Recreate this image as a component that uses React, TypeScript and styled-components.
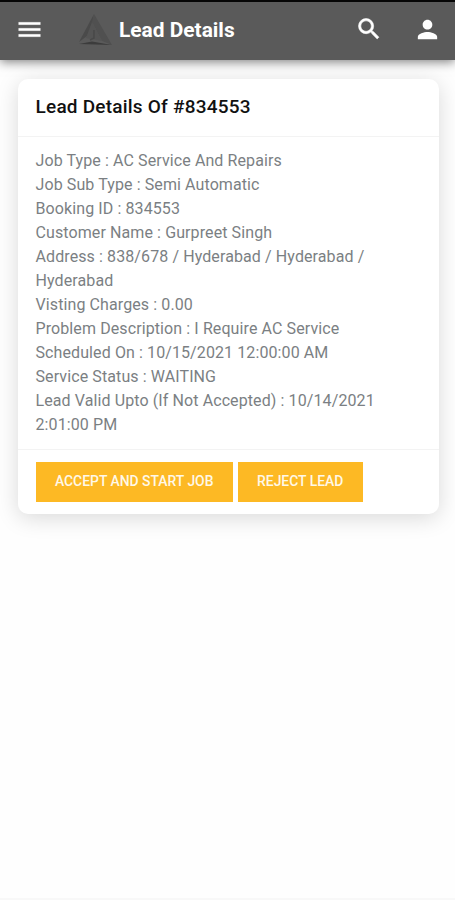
import React from "react";
import styled, { createGlobalStyle } from "styled-components";

const GlobalStyle = createGlobalStyle`
  * { box-sizing: border-box; }
  body { margin: 0; background: #fefefe; font-family: Roboto, sans-serif; }
`;

const Screen = styled.div`
  display: flex;
  flex-direction: column;
  height: 900px;
  overflow: hidden;
  border-bottom: 2px solid #f8f8f8;
`;

const AppBar = styled.header`
  display: flex;
  align-items: center;
  flex: none;
  height: 60px;
  padding: 0 13px 0 17px;
  border-top: 2px solid #060606;
  background: #5a5a5a;
  color: #fff;
  box-shadow: 0 2px 10px rgba(0, 0, 0, 0.5);
`;

const IconButton = styled.button<{ $gap?: number }>`
  display: flex;
  flex: none;
  margin: 0 0 4px ${(p) => p.$gap ?? 0}px;
  padding: 0;
  border: 0;
  background: none;
  color: inherit;
`;

const Logo = styled.svg`
  flex: none;
  margin: 0 6px 3px 34px;
`;

const Title = styled.h1`
  flex: 1;
  margin: 0 0 3px;
  font-size: 20.9px;
  line-height: 26px;
  font-weight: 700;
  letter-spacing: 0;
  white-space: nowrap;
`;

const Card = styled.section`
  margin: 19px 16px 0 18px;
  border-radius: 10px;
  background: #fff;
  box-shadow: 0 4px 22px rgba(0, 0, 0, 0.15);
`;

const CardHeader = styled.h2`
  height: 58px;
  margin: 0;
  padding: 15px 17.5px;
  border-bottom: 1px solid #f3f3f3;
  color: #111;
  font-size: 19px;
  line-height: 26px;
  font-weight: 500;
  letter-spacing: 0.22px;
`;

const Details = styled.div`
  height: 312px;
  padding: 12px 17.5px 0;
  color: #7b7f83;
  font-size: 16px;
  line-height: 24px;
  letter-spacing: 0.1px;
`;

const Detail = styled.p`
  margin: 0;
`;

const Actions = styled.footer`
  display: flex;
  gap: 5px;
  height: 65px;
  padding: 11.5px 17.7px;
  border-top: 1px solid #f3f3f3;
`;

const ActionButton = styled.button<{ $width: number }>`
  width: ${(p) => p.$width}px;
  height: 40px;
  padding: 0 0 1px;
  border: 0;
  background: #fdb924;
  color: #fff8e8;
  font: 500 13.9px/20px Roboto, sans-serif;
  white-space: nowrap;
`;

const details = [
  "Job Type : AC Service And Repairs",
  "Job Sub Type : Semi Automatic",
  "Booking ID : 834553",
  "Customer Name : Gurpreet Singh",
  "Address : 838/678 / Hyderabad / Hyderabad / Hyderabad",
  "Visting Charges : 0.00",
  "Problem Description : I Require AC Service",
  "Scheduled On : 10/15/2021 12:00:00 AM",
  "Service Status : WAITING",
  "Lead Valid Upto (If Not Accepted) : 10/14/2021 2:01:00 PM",
];

const paths = {
  menu: "M3 18h18v-2H3v2zm0-5h18v-2H3v2zm0-7v2h18V6H3z",
  search:
    "M15.5 14h-.79l-.28-.27A6.471 6.471 0 0 0 16 9.5 6.5 6.5 0 1 0 9.5 16c1.61 0 3.09-.59 4.23-1.57l.27.28v.79l5 4.99L20.49 19l-4.99-5zm-6 0C7.01 14 5 11.99 5 9.5S7.01 5 9.5 5 14 7.01 14 9.5 11.99 14 9.5 14z",
  person:
    "M12 12c2.21 0 4-1.79 4-4s-1.79-4-4-4-4 1.79-4 4 1.79 4 4 4zm0 2c-2.67 0-8 1.34-8 4v2h16v-2c0-2.66-5.33-4-8-4z",
};

function Icon({ name, size, weight = 0 }: { name: keyof typeof paths; size: number; weight?: number }) {
  return (
    <svg
      width={size}
      height={size}
      viewBox="0 0 24 24"
      fill="currentColor"
      stroke="currentColor"
      strokeWidth={weight}
    >
      <path d={paths[name]} />
    </svg>
  );
}

export default function App() {
  return (
    <>
      <GlobalStyle />
      <Screen>
        <AppBar>
          <IconButton aria-label="Menu" $gap={-2}>
            <Icon name="menu" size={29} weight={0.2} />
          </IconButton>
          <Logo width="35" height="32" viewBox="0 0 35 32">
            <path d="M16 0 1 28 13 19Z" fill="#4a4a4a" />
            <path d="M16 0 34 31 24 27 14 8Z" fill="#505050" />
            <path d="M1 30 14 27.5 34 31Z" fill="#3c3c3c" />
            <path d="M14 8 8 24 24 27Z" fill="#545454" />
            <path d="M16 16v8l-4 2" fill="none" stroke="#494949" strokeWidth="1.6" />
          </Logo>
          <Title>Lead Details</Title>
          <IconButton aria-label="Search">
            <Icon name="search" size={28} weight={0.5} />
          </IconButton>
          <IconButton aria-label="Account" $gap={30}>
            <Icon name="person" size={29} />
          </IconButton>
        </AppBar>
        <Card>
          <CardHeader>Lead Details Of #834553</CardHeader>
          <Details>
            {details.map((line) => (
              <Detail key={line}>{line}</Detail>
            ))}
          </Details>
          <Actions>
            <ActionButton $width={197}>ACCEPT AND START JOB</ActionButton>
            <ActionButton $width={125}>REJECT LEAD</ActionButton>
          </Actions>
        </Card>
      </Screen>
    </>
  );
}
